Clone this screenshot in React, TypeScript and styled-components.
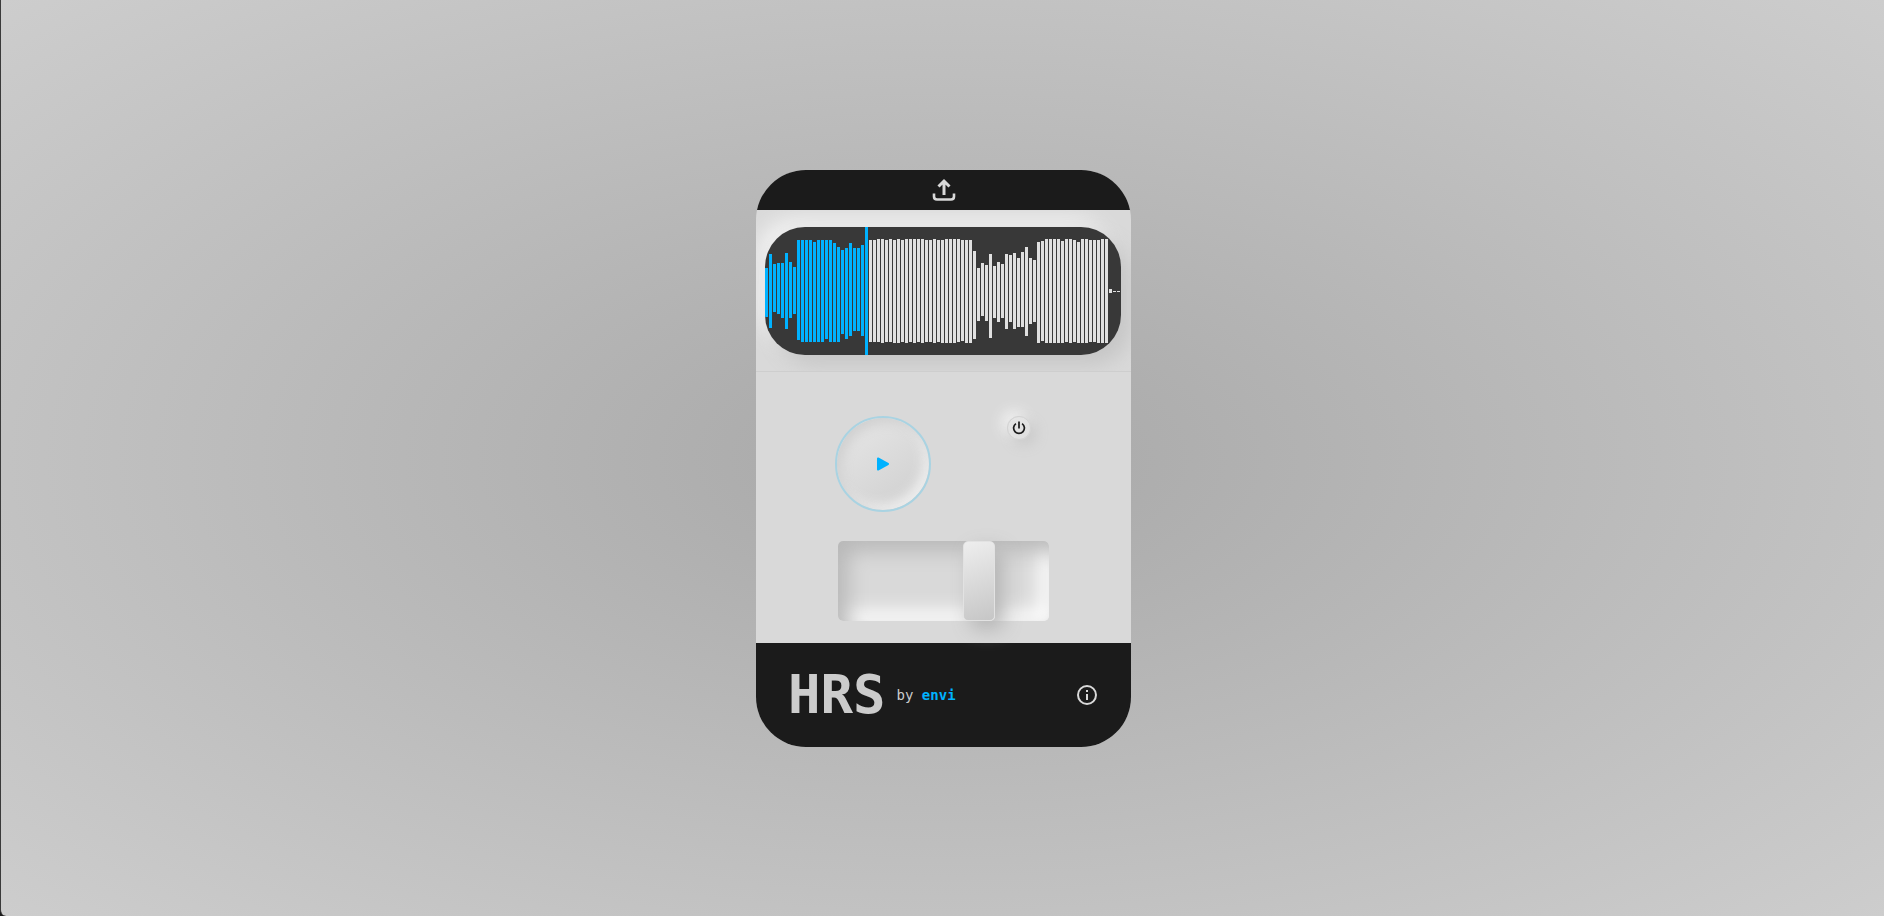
import React, { useState } from "react";
import styled, { createGlobalStyle } from "styled-components";

const GlobalStyle = createGlobalStyle`
  * { box-sizing: border-box; }
  body { margin: 0; background: #1b1b1b; font-family: "DejaVu Sans Mono", "Liberation Mono", monospace; }
  button { border: 0; padding: 0; cursor: pointer; }
`;

const Page = styled.main`
  min-height: 100vh;
  display: flex;
  align-items: center;
  justify-content: center;
  padding: 1px 0 0 2px;
  border-left: 1px solid #3a3a3a;
  border-bottom-left-radius: 6px;
  background: radial-gradient(ellipse, #a8a8a8 0%, #cdcdcd 100%);
`;

const Device = styled.section`
  width: 375px;
  border-radius: 50px;
  overflow: hidden;
  background: #d9d9d9;
`;

const UploadButton = styled.button`
  width: 100%;
  height: 40px;
  display: flex;
  align-items: center;
  justify-content: center;
  background: #1b1b1b;
  color: #d9d9d9;
`;

const Display = styled.div`
  padding: 17px 10px 16px 9px;
  overflow: hidden;
  border-bottom: 1px solid #cecece;
`;

const Screen = styled.div`
  height: 128px;
  border-radius: 40px;
  background: #383838;
  overflow: hidden;
  box-shadow: 10px 10px 20px #c6c6c6, -10px -10px 20px #f0f0f0;
`;

const Wave = styled.svg`
  display: block;
  width: 100%;
  height: 100%;
`;

const Controls = styled.div`
  padding: 44px 81px 22px 79px;
`;

const Buttons = styled.div`
  display: flex;
  justify-content: space-between;
  padding-right: 19px;
`;

const PlayButton = styled.button`
  width: 96px;
  height: 96px;
  display: grid;
  place-items: center;
  border-radius: 50%;
  && { border: 2px solid #a9d3e2; }
  background: linear-gradient(145deg, #e8e8e8, #cdcdcd);
  box-shadow: inset 5px 5px 12px #d0d0d0, inset -5px -5px 12px #f0f0f0;
  color: #00b2ff;
`;

const PowerButton = styled.button`
  width: 24px;
  height: 24px;
  display: grid;
  place-items: center;
  border-radius: 50%;
  && { border: 1px solid #d3d3d3; }
  background: linear-gradient(145deg, #e6e6e6, #dedede);
  color: #1b1b1b;
  box-shadow: 5px 5px 14px #c9c9c9, -5px -5px 14px #f4f4f4;
`;

const Slider = styled.input`
  appearance: none;
  display: block;
  width: 211px;
  height: 80px;
  margin: 29px 0 0 3px;
  border-radius: 5px;
  background: #d9d9d9;
  box-shadow: inset 10px 10px 20px #b8b8b8, inset -10px -10px 20px #ffffff;
  cursor: pointer;

  &::-webkit-slider-thumb {
    appearance: none;
    width: 32px;
    height: 80px;
    border: 1px solid #e2e2e2;
    border-radius: 5px;
    background: linear-gradient(160deg, #eeeeee, #c6c6c6);
    box-shadow: 8px 8px 20px #b4b4b4;
  }
`;

const Footer = styled.footer`
  height: 104px;
  display: flex;
  align-items: center;
  padding: 0 34px 0 32px;
  background: #1b1b1b;
  color: #cccccc;
`;

const Brand = styled.h1`
  margin: 0;
  font-size: 54px;
  line-height: 64px;
`;

const Byline = styled.p`
  margin: 0 auto 0 11px;
  font-size: 14px;
  line-height: 20px;
`;

const AuthorLink = styled.a`
  color: #00b2ff;
  font-weight: 700;
  text-decoration: none;
`;

const InfoButton = styled.button`
  width: 20px;
  height: 20px;
  background: transparent;
  color: #d9d9d9;
`;

const Icon = styled.svg`
  display: block;
  fill: none;
  stroke: currentColor;
`;

const PLAYHEAD = 25;

/* Top and bottom edge of each bar, in a 128 unit high display. */
const PEAKS: [number, number][] = [
  [41, 90], [27, 101], [37, 85], [36, 87], [36, 91], [26, 102], [35, 91], [40, 87], [13, 113], [13, 115],
  [13, 115], [13, 115], [15, 115], [13, 115], [13, 115], [13, 112], [13, 115], [16, 115], [20, 115], [23, 107],
  [21, 112], [16, 109], [21, 104], [21, 104], [18, 109], [0, 128], [13, 115], [13, 115], [12, 115], [12, 116],
  [13, 115], [12, 115], [13, 116], [12, 116], [13, 115], [12, 116], [12, 115], [12, 116], [12, 115], [12, 116],
  [13, 115], [13, 115], [12, 116], [13, 115], [13, 116], [12, 116], [12, 116], [12, 116], [12, 115], [13, 114],
  [13, 116], [13, 116], [24, 112], [41, 94], [36, 89], [38, 94], [27, 111], [39, 91], [35, 95], [37, 91],
  [27, 102], [28, 95], [26, 102], [31, 100], [25, 100], [20, 109], [31, 97], [33, 95], [15, 116], [14, 114],
  [12, 116], [12, 116], [12, 116], [12, 116], [14, 116], [12, 115], [12, 116], [13, 115], [15, 116], [12, 116],
  [12, 116], [13, 115], [13, 115], [13, 116], [12, 116], [12, 116], [62, 66], [64, 65], [64, 65],
];

export default function App() {
  const [tempo, setTempo] = useState(70);
  return (
    <>
      <GlobalStyle />
      <Page>
        <Device>
          <UploadButton aria-label="Upload audio">
            <Icon width="24" height="24" viewBox="0 0 24 24" strokeWidth="3">
              <path d="M2 15.5V18.5Q2 21.5 5 21.5H19Q22 21.5 22 18.5V15.5" strokeWidth="2.6" />
              <path d="M12 17V3M6.5 8.5L12 3L17.5 8.5" />
            </Icon>
          </UploadButton>
          <Display>
            <Screen>
              <Wave viewBox="0 0 356 128" role="img" aria-label="Waveform" shapeRendering="crispEdges">
                {PEAKS.map(([top, bottom], i) => (
                  <rect
                    key={i}
                    x={i * 4}
                    y={top}
                    width="3"
                    height={bottom - top}
                    fill={i <= PLAYHEAD ? "#00b2ff" : "#e0e0e0"}
                  />
                ))}
              </Wave>
            </Screen>
          </Display>
          <Controls>
            <Buttons>
              <PlayButton aria-label="Play">
                <Icon width="14" height="14" viewBox="0 0 14 14">
                  <path d="M2 1.5L12 7L2 12.5Z" fill="currentColor" strokeWidth="2" strokeLinejoin="round" />
                </Icon>
              </PlayButton>
              <PowerButton aria-label="Power">
                <Icon width="14" height="14" viewBox="0 0 14 14" strokeWidth="1.7">
                  <path d="M7 0.5V7.5M3.9 2.6A5.4 5.4 0 1 0 10.1 2.6" />
                </Icon>
              </PowerButton>
            </Buttons>
            <Slider
              type="range"
              aria-label="Tempo"
              value={tempo}
              onChange={(e) => setTempo(Number(e.target.value))}
            />
          </Controls>
          <Footer>
            <Brand>HRS</Brand>
            <Byline>
              by <AuthorLink href="#envi">envi</AuthorLink>
            </Byline>
            <InfoButton aria-label="About">
              <Icon width="20" height="20" viewBox="0 0 20 20" strokeWidth="2">
                <circle cx="10" cy="10" r="9" />
                <path d="M10 5V7M10 9V15" />
              </Icon>
            </InfoButton>
          </Footer>
        </Device>
      </Page>
    </>
  );
}
